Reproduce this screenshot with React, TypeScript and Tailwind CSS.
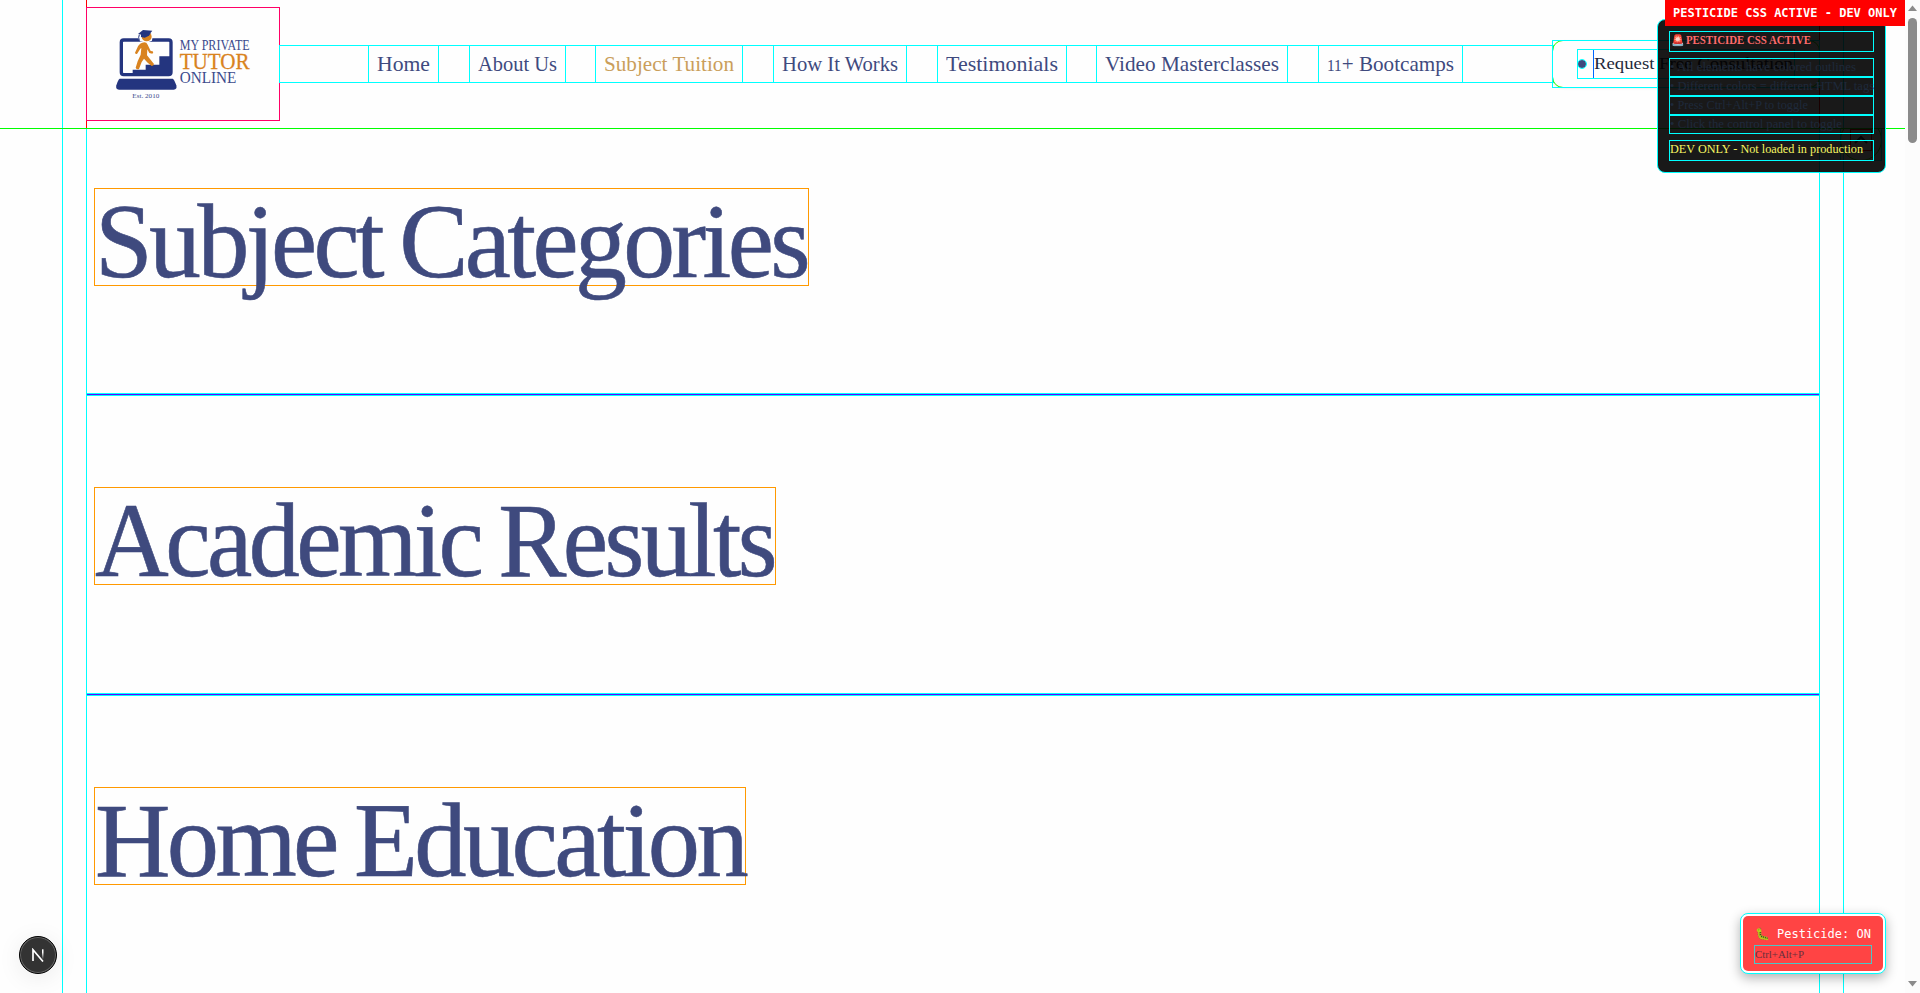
import { useLayoutEffect, useRef, useState } from "react";
import type { ReactNode } from "react";

/* Stretches a single line of text to an exact width. */
function Fit({ width, className = "", children }: { width: number; className?: string; children: ReactNode }) {
  const ref = useRef<HTMLSpanElement>(null);
  const [scale, setScale] = useState(1);
  useLayoutEffect(() => {
    if (ref.current && ref.current.offsetWidth > 0) setScale(width / ref.current.getBoundingClientRect().width);
  }, []);
  return (
    <span className="block text-left whitespace-nowrap" style={{ width }}>
      <span ref={ref} className={`inline-block origin-left ${className}`} style={{ transform: `scaleX(${scale})` }}>
        {children}
      </span>
    </span>
  );
}

function Logo() {
  return (
    <svg viewBox="111 24 576 336" className="h-28 w-48 shrink-0 outline outline-[#ff0066]">
      <rect x="214" y="120" width="149" height="104" rx="7" fill="#fefefe" stroke="#24357f" strokeWidth="10" />
      <path d="M248 219V209H287V194H328V169H360V224H216V219Z" fill="#24357f" />
      <path d="M209 236H368Q372 237 379 256Q382 269 371 269H207Q196 269 199 256Q204 239 209 236Z" fill="#24357f" />
      <path d="M262 112L274 92H310L306 122L290 128L270 124Z" fill="#fefefe" />
      <ellipse cx="290" cy="110" rx="15" ry="14" fill="#d9831f" />
      <path d="M264 102L279 90L307 92L294 108Z" fill="#24357f" />
      <path d="M273 101V111L284 113L297 107L302 99Z" fill="#24357f" />
      <path d="M268 104Q264 112 268 122" fill="none" stroke="#24357f" strokeWidth="3" />
      <path d="M283 127Q270 129 264 139L255 158Q256 163 261 162L271 146L274 144L272 164L263 184L257 203Q260 210 267 207L275 186L282 176L293 188L305 198Q311 198 312 192L303 181L291 166L292 148L298 159L307 161Q312 158 308 154L302 153L293 134Q290 127 283 127Z" fill="#d9831f" />
      <g fontFamily="'Liberation Serif', serif">
        <text x="389" y="150" fontSize="41" fill="#3b4a8c" textLength="210" lengthAdjust="spacingAndGlyphs">MY PRIVATE</text>
        <text x="389" y="206" fontSize="70" fill="#d9831f" stroke="#d9831f" strokeWidth="0.8" textLength="210" lengthAdjust="spacingAndGlyphs">TUTOR</text>
        <text x="389" y="248" fontSize="51" fill="#3b4a8c" textLength="170" lengthAdjust="spacingAndGlyphs">ONLINE</text>
        <text x="247" y="293" fontSize="20" fill="#3b4a8c" textLength="81" lengthAdjust="spacingAndGlyphs">Est. 2010</text>
      </g>
    </svg>
  );
}

const links: { label: ReactNode; width: number; active?: boolean }[] = [
  { label: "Home", width: 69 },
  { label: "About Us", width: 95 },
  { label: "Subject Tuition", width: 146, active: true },
  { label: "How It Works", width: 132 },
  { label: "Testimonials", width: 128 },
  { label: "Video Masterclasses", width: 190 },
  { label: <><span className="text-[16px]">11</span>+ Bootcamps</>, width: 143 },
];

function Header() {
  return (
    <header className="relative z-10 h-[129px] border-b border-[#00ff00] bg-[#fefefe]">
      <div className="ml-[62px] h-32 w-[1782px] border-x border-[#00ffff] px-[23px]">
        <div className="flex h-32 items-center justify-between border-x border-[#ff0000]">
          <Logo />
          <nav className="flex h-9 w-[1273px] items-stretch justify-center gap-[31.6px] pr-px outline outline-[#00ffff]">
            {links.map((l, i) => (
              <a key={i} className={`px-2 leading-9 font-['Liberation_Serif',serif] text-[22px] outline outline-[#00ffff] ${l.active ? "text-[#ca9e5b]" : "text-[#3f4a7e]"}`}>
                <Fit width={l.width - 16}>{l.label}</Fit>
              </a>
            ))}
          </nav>
          <div className="outline outline-[#00ffff]">
            <button className="flex h-[46px] w-[266px] items-center rounded-[10px] bg-[#fefefe] pl-[25px] shadow-sm outline outline-[#33ff00]">
              <span className="flex h-7 w-[216px] items-center outline outline-[#00ffff]">
                <span className="size-2 rounded-full bg-[#3f4a7e] outline outline-[#00ffff]" />
                <span className="ml-[7px] h-7 border-l border-[#0066ff] font-['Liberation_Serif',serif] text-[17px] leading-[27px] text-[#1e293b]">
                  <Fit width={199}>Request Free Consultation</Fit>
                </span>
              </span>
            </button>
          </div>
        </div>
      </div>
    </header>
  );
}

function Heading({ width, text, inner }: { width: number; text: string; inner: number }) {
  return (
    <h2 className="ml-2 h-24 font-['Liberation_Serif',serif] text-[106px] leading-[105px] tracking-[-0.035em] [word-spacing:-0.04em] text-[#3f4a7e] outline outline-[#ff9900] [-webkit-text-stroke:0.6px_#3f4a7e]" style={{ width }}>
      <Fit width={inner}>{text}</Fit>
    </h2>
  );
}

function Divider() {
  return <div className="h-[3px] border-y border-[#00ffff] bg-[#6600ff]" />;
}

const tips = [
  { text: "• All elements have colored outlines", width: 186 },
  { text: "• Different colors = different HTML tags", width: 204 },
  { text: "• Press Ctrl+Alt+P to toggle", width: 138 },
  { text: "• Click the control panel to toggle", width: 172 },
];

function InfoPanel() {
  return (
    <aside className="absolute top-[19px] left-[1657px] z-20 h-[154px] w-[229px] rounded-lg border border-[#00ffff] bg-black/90 px-[11px] pt-[11px] font-['Liberation_Serif',serif] text-[12.5px]">
      <div className="flex h-[21px] gap-[3px] border border-[#00ffff] pl-px leading-[16px] font-bold text-[#ff6b6b]">
        <span className="w-3 text-[11px]">🚨</span>
        <Fit width={125}>PESTICIDE CSS ACTIVE</Fit>
      </div>
      <div className="mt-[6px] text-[#1e293b]">
        {tips.map((t) => (
          <div key={t.text} className="h-[19px] border border-[#00ffff] leading-[16px]">
            <Fit width={t.width}>{t.text}</Fit>
          </div>
        ))}
      </div>
      <div className="mt-[6px] h-[21px] border border-[#00ffff] leading-[16px] text-[#f5f562]">
        <Fit width={193}>DEV ONLY - Not loaded in production</Fit>
      </div>
    </aside>
  );
}

function ControlPanel() {
  return (
    <div className="absolute top-[913px] left-[1740px] z-20 h-[61px] w-[146px] rounded-lg border border-[#00ffff] bg-white p-[2px] shadow-[0_4px_12px_rgba(0,0,0,0.3)]">
      <div className="h-full rounded-[5px] bg-[#ff4444] px-[11px] pt-2 font-['DejaVu_Sans_Mono',monospace] text-[12px] text-white">
        <div className="flex h-[21px] pl-px leading-[20px]">
          <span className="w-[22px]">🐛</span>
          <span>Pesticide: ON</span>
        </div>
        <div className="h-[19px] border border-[#00ffff] font-['Liberation_Serif',serif] text-[11px] leading-[17px] text-[#1e293b] opacity-70">
          <Fit width={49}>Ctrl+Alt+P</Fit>
        </div>
      </div>
    </div>
  );
}

function Scrollbar() {
  return (
    <div className="absolute top-0 right-0 z-30 flex h-full w-[15px] flex-col items-center bg-[#fcfcfc]">
      <svg viewBox="0 0 15 18" className="h-[18px] w-[15px]"><path d="M3 11L7.5 5.5L12 11Z" fill="#8b8b8b" /></svg>
      <div className="h-[125px] w-[9px] rounded-full bg-[#8b8b8b]" />
      <svg viewBox="0 0 15 18" className="mt-auto h-[18px] w-[15px]"><path d="M3 6L7.5 11.5L12 6Z" fill="#8b8b8b" /></svg>
    </div>
  );
}

export default function App() {
  return (
    <div className="relative h-[993px] w-[1920px] overflow-hidden bg-[#fefefe]">
      <Header />
      <main className="ml-[62px] h-[864px] w-[1782px] border-x border-[#00ffff] px-[23px]">
        <div className="h-full border-x border-[#00ffff]">
          <section className="h-[264px] pt-[60px]"><Heading width={713} inner={712} text="Subject Categories" /></section>
          <Divider />
          <section className="h-[297px] pt-[92px]"><Heading width={680} inner={679} text="Academic Results" /></section>
          <Divider />
          <section className="h-[297px] pt-[92px]"><Heading width={650} inner={650} text="Home Education" /></section>
        </div>
      </main>

      <div className="absolute top-[120px] left-[1841px] outline outline-[#00ffff]">
        <div className="flex size-10 items-center justify-center rounded-full bg-[#fefefe] outline outline-[#33ff00]">
          <svg viewBox="0 0 20 20" className="size-5 outline outline-[#ff0000]"><path d="M4 13L10 7L16 13" fill="none" stroke="#1e293b" strokeWidth="2" /></svg>
        </div>
      </div>

      <InfoPanel />
      <div className="absolute top-0 left-[1665px] z-30 h-[26px] w-60 bg-[#ff0000] pl-2 font-['DejaVu_Sans_Mono',monospace] text-[12px] leading-[26px] font-bold whitespace-nowrap text-white">
        PESTICIDE CSS ACTIVE - DEV ONLY
      </div>
      <ControlPanel />

      <div className="absolute top-[936px] left-[19px] flex size-[38px] items-center justify-center rounded-full border border-black bg-[#333333] shadow-[0_4px_24px_rgba(0,0,0,0.08),inset_0_0_0_1px_rgba(255,255,255,0.25)]">
        <svg viewBox="0 0 14 14" className="size-[14px]" fill="none">
          <defs>
            <linearGradient id="nFade" x1="0" y1="0" x2="0" y2="1"><stop offset="0.3" stopColor="#fff" /><stop offset="1" stopColor="#fff" stopOpacity="0" /></linearGradient>
          </defs>
          <path d="M2 13V1.8L12 13.5" stroke="#fff" strokeWidth="1.7" />
          <rect x="11" y="1.3" width="1.5" height="10" fill="url(#nFade)" />
        </svg>
      </div>
      <Scrollbar />
    </div>
  );
}
